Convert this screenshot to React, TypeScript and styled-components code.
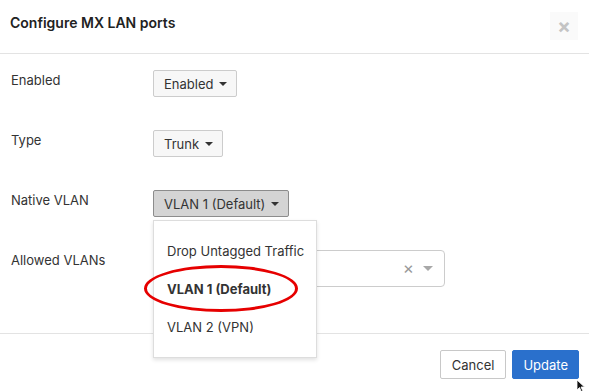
import React from "react"
import styled, { createGlobalStyle } from "styled-components"

const GlobalStyle = createGlobalStyle`
  html, body {
    margin: 0;
    padding: 0;
    background: #ffffff;
  }
  body {
    font-family: Inter, "Noto Sans", "Liberation Sans", sans-serif;
    color: #333333;
  }
`

const App = () => {
  return (
    <>
      <GlobalStyle />
      <Modal>
        <Header>
          <Title>Configure MX LAN ports</Title>
          <Close aria-label="close">×</Close>
        </Header>
        <Body>
          <Row>
            <Label>Enabled</Label>
            <Control>
              <DropButton>
                Enabled <Caret />
              </DropButton>
            </Control>
          </Row>
          <Row>
            <Label>Type</Label>
            <Control>
              <DropButton>
                Trunk <Caret />
              </DropButton>
            </Control>
          </Row>
          <Row>
            <Label>Native VLAN</Label>
            <Control>
              <DropButton active>
                VLAN 1 (Default) <Caret />
              </DropButton>
              <Menu>
                <MenuItem>Drop Untagged Traffic</MenuItem>
                <MenuItem selected>VLAN 1 (Default)</MenuItem>
                <MenuItem>VLAN 2 (VPN)</MenuItem>
                <Circle />
              </Menu>
            </Control>
          </Row>
          <Row>
            <Label>Allowed VLANs</Label>
            <Control>
              <MultiSelect>
                <ClearX>×</ClearX>
                <Caret dim />
              </MultiSelect>
            </Control>
          </Row>
        </Body>
        <Footer>
          <CancelButton>Cancel</CancelButton>
          <PrimaryButton>Update</PrimaryButton>
        </Footer>
        <Pointer width="10" height="14" viewBox="0 0 10 14">
          <path d="M1 1 L1 11 L3.5 8.5 L5.5 13 L7 12.3 L5 8 L8.5 8 Z" fill="#111" stroke="#fff" strokeWidth="0.8" />
        </Pointer>
      </Modal>
    </>
  )
}

export default App

const Modal = styled.div`
  position: relative;
  width: 589px;
  height: 391px;
  overflow: hidden;
  background: #fff;
  display: flex;
  flex-direction: column;
`
const Header = styled.div`
  height: 54px;
  box-sizing: border-box;
  padding: 13px 11px 0 10px;
  border-bottom: 1px solid #e3e3e3;
  display: flex;
  justify-content: space-between;
  align-items: flex-start;
`
const Title = styled.div`
  font-size: 14px;
  font-weight: 600;
  color: #222;
  line-height: 18px;
  padding-top: 1px;
`
const Close = styled.div`
  width: 28px;
  height: 28px;
  margin-top: -1px;
  background: #fafafa;
  color: #c4c4c4;
  font-size: 20px;
  font-weight: 700;
  display: flex;
  align-items: center;
  justify-content: center;
  line-height: 1;
`
const Body = styled.div`
  height: 280px;
  box-sizing: border-box;
  padding: 16px 0 0 11px;
  border-bottom: 1px solid #e3e3e3;
`
const Row = styled.div`
  display: grid;
  grid-template-columns: 142px 1fr;
  height: 60px;
`
const Label = styled.div`
  font-size: 13px;
  line-height: 18px;
  padding-top: 1px;
  color: #333;
`
const Control = styled.div`
  position: relative;
  display: flex;
  align-items: flex-start;
`
const DropButton = styled.div<{ active?: boolean }>`
  height: 27px;
  box-sizing: border-box;
  padding: 0 9px 0 10px;
  display: flex;
  align-items: center;
  gap: 6px;
  font-size: 13px;
  color: #333;
  background: ${(p) => (p.active ? "#d4d4d4" : "#f7f7f7")};
  border: 1px solid ${(p) => (p.active ? "#8c8c8c" : "#cccccc")};
  border-radius: 2px;
`
const Caret = styled.span<{ dim?: boolean }>`
  display: inline-block;
  width: 0;
  height: 0;
  border-left: ${(p) => (p.dim ? 5 : 4)}px solid transparent;
  border-right: ${(p) => (p.dim ? 5 : 4)}px solid transparent;
  border-top: ${(p) => (p.dim ? 5 : 4)}px solid ${(p) => (p.dim ? "#a8a8a8" : "#333")};
`
const Menu = styled.div`
  position: absolute;
  left: 0;
  top: 30px;
  z-index: 2;
  width: 164px;
  box-sizing: border-box;
  padding: 11px 0;
  background: #fff;
  border: 1px solid #dddddd;
  box-shadow: 0 2px 4px rgba(0, 0, 0, 0.12);
`
const MenuItem = styled.div<{ selected?: boolean }>`
  height: 38px;
  padding-left: 13px;
  display: flex;
  align-items: center;
  font-size: 13px;
  color: #333;
  font-weight: ${(p) => (p.selected ? 700 : 400)};
  white-space: nowrap;
`
const Circle = styled.span`
  position: absolute;
  left: -10px;
  top: 44px;
  width: 154px;
  height: 47px;
  box-sizing: border-box;
  border: 3px solid #e60000;
  border-radius: 50%;
`
const MultiSelect = styled.div`
  width: 292px;
  height: 37px;
  box-sizing: border-box;
  border: 1px solid #cccccc;
  border-radius: 4px;
  display: flex;
  align-items: center;
  justify-content: flex-end;
  gap: 9px;
  padding-right: 11px;
`
const ClearX = styled.span`
  color: #999;
  font-size: 17px;
  line-height: 1;
`
const Footer = styled.div`
  flex: 1;
  display: flex;
  justify-content: flex-end;
  align-items: flex-start;
  gap: 6px;
  padding: 16px 10px 0 0;
`
const CancelButton = styled.div`
  height: 29px;
  box-sizing: border-box;
  padding: 0 11px;
  display: flex;
  align-items: center;
  font-size: 13px;
  color: #333;
  background: #fff;
  border: 1px solid #c8c8c8;
  border-radius: 2px;
`
const PrimaryButton = styled(CancelButton)`
  padding: 0 10px;
  color: #fff;
  background: #2a70cc;
  border-color: #2a70cc;
`
const Pointer = styled.svg`
  position: absolute;
  left: 576px;
  top: 379px;
`
